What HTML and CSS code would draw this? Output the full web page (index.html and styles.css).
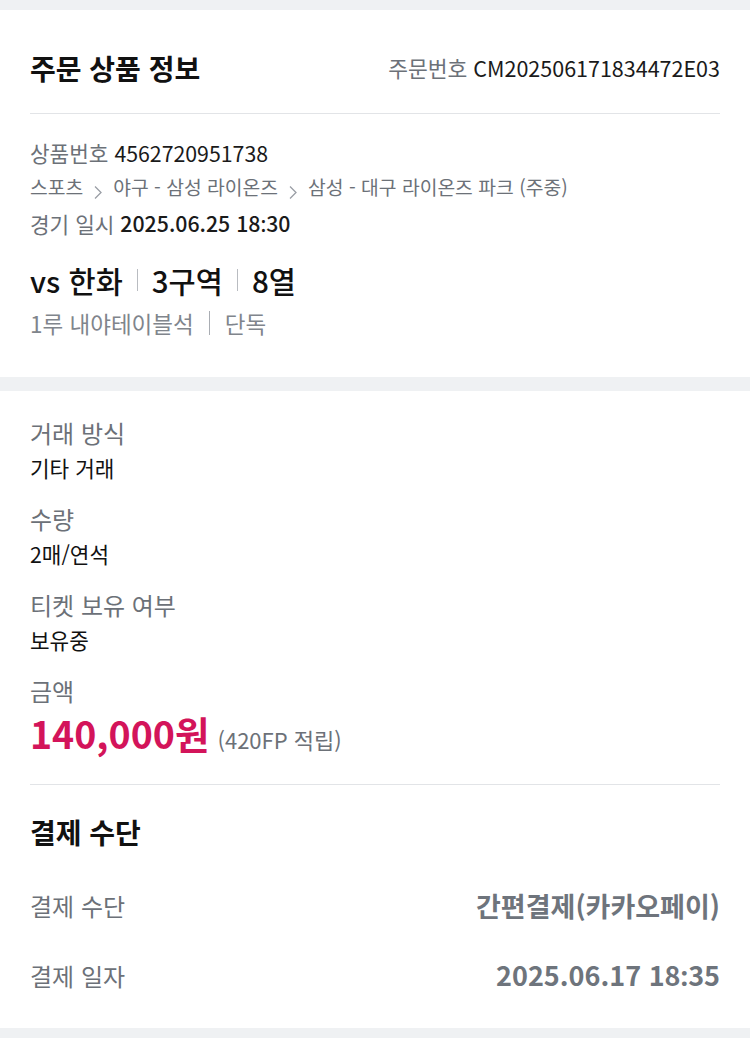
FILE: index.html
```html
<!DOCTYPE html>
<html lang="ko">
<head>
<meta charset="utf-8">
<link rel="stylesheet" href="styles.css">
</head>
<body>
<section class="card first">
  <div class="head">
    <h1 class="title">주문 상품 정보</h1>
    <div class="order"><span class="muted">주문번호</span> <span class="code">CM202506171834472E03</span></div>
  </div>
  <div class="info">
    <div class="line"><span class="muted">상품번호</span> <span class="dark">4562720951738</span></div>
    <div class="line crumbs">
      <span>스포츠</span>
      <svg class="chev" viewBox="0 0 10 14" width="10" height="14"><path d="M2 1.5 L8 7.5 L2 13.5" fill="none" stroke="#9a9ea5" stroke-width="1.3"/></svg>
      <span>야구 - 삼성 라이온즈</span>
      <svg class="chev" viewBox="0 0 10 14" width="10" height="14"><path d="M2 1.5 L8 7.5 L2 13.5" fill="none" stroke="#9a9ea5" stroke-width="1.3"/></svg>
      <span>삼성 - 대구 라이온즈 파크 (주중)</span>
    </div>
    <div class="line"><span class="muted">경기 일시</span> <span class="dark strong">2025.06.25 18<span class="colon">:</span>30</span></div>
  </div>
  <div class="seat">
    <span>vs 한화</span><i class="bar"></i><span>3구역</span><i class="bar"></i><span>8열</span>
  </div>
  <div class="sub">
    <span>1루 내야테이블석</span><i class="bar small"></i><span>단독</span>
  </div>
</section>
<section class="card second">
  <dl class="fields">
    <dt>거래 방식</dt><dd>기타 거래</dd>
    <dt>수량</dt><dd>2매/연석</dd>
    <dt>티켓 보유 여부</dt><dd>보유중</dd>
    <dt>금액</dt>
    <dd class="price"><strong>140,000원</strong> <span class="point">(420FP 적립)</span></dd>
  </dl>
  <div class="divider"></div>
  <h2 class="title pay-title">결제 수단</h2>
  <div class="row"><span class="muted">결제 수단</span><span class="val">간편결제(카카오페이)</span></div>
  <div class="row r2"><span class="muted">결제 일자</span><span class="val">2025.06.17 18<span class="colon">:</span>35</span></div>
</section>
</body>
</html>
```
FILE: styles.css
```css
* { box-sizing: border-box; }
body {
  margin: 0;
  background: #eff1f3;
  font-family: "Noto Sans CJK KR", "Noto Sans", sans-serif;
  color: #111;
}
.card {
  background: #fff;
  padding: 0 30px;
}
.first { margin-top: 10px; padding-bottom: 38px; }
.second { margin-top: 14px; padding-top: 26px; padding-bottom: 34px; margin-bottom: 13px; }
.head {
  display: flex;
  justify-content: space-between;
  align-items: center;
  padding: 38px 0 25px;
  border-bottom: 1px solid #e2e4e7;
}
.title {
  margin: 0;
  font-size: 28px;
  line-height: 40px;
  font-weight: 700;
  color: #111;
}
.order { font-size: 21.5px; line-height: 40px; }
.muted { color: #6c7178; }
.code { color: #1a1a1a; }
.info { padding-top: 21px; }
.line { font-size: 21.3px; line-height: 35px; display: flex; align-items: center; gap: 6px; }
.dark { color: #1a1a1a; }
.line .strong { font-weight: 500; }
.colon { font-family: "Noto Sans", sans-serif; }
.crumbs { font-size: 19.3px; color: #6c7178; gap: 10px; }
.chev { margin-top: 8px; }
.seat {
  margin-top: 17px;
  display: flex;
  align-items: center;
  font-size: 29.5px;
  line-height: 44px;
  font-weight: 500;
  color: #111;
}
.bar {
  display: inline-block;
  width: 1px;
  height: 22px;
  background: #b9bcc1;
  margin: 0 14px;
}
.sub {
  margin-top: 5px;
  display: flex;
  align-items: center;
  font-size: 22.5px;
  line-height: 32px;
  color: #80858c;
}
.bar.small { height: 24px; margin: 0 15px; background: #a9adb3; }
.fields { margin: 0; }
.fields dt {
  font-size: 24px;
  line-height: 32px;
  color: #6c7178;
  margin-top: 20px;
}
.fields dt:first-child { margin-top: 0; }
.fields dd {
  margin: 4px 0 0;
  font-size: 21.3px;
  line-height: 30px;
  color: #111;
}
.fields dd.price {
  margin-top: 3px;
  line-height: 46px;
  display: flex;
  align-items: baseline;
  gap: 8px;
}
.price strong {
  font-size: 37.5px;
  font-weight: 700;
  color: #d3145a;
}
.point { font-size: 22px; color: #6c7178; }
.divider { margin-top: 22px; height: 1px; background: #e2e4e7; }
.pay-title { margin-top: 27px; }
.row {
  margin-top: 36px;
  display: flex;
  justify-content: space-between;
  align-items: center;
  line-height: 36px;
}
.row.r2 { margin-top: 33px; }
.row .muted { font-size: 24px; }
.row .val { font-size: 27px; font-weight: 700; color: #6e747c; }
```
